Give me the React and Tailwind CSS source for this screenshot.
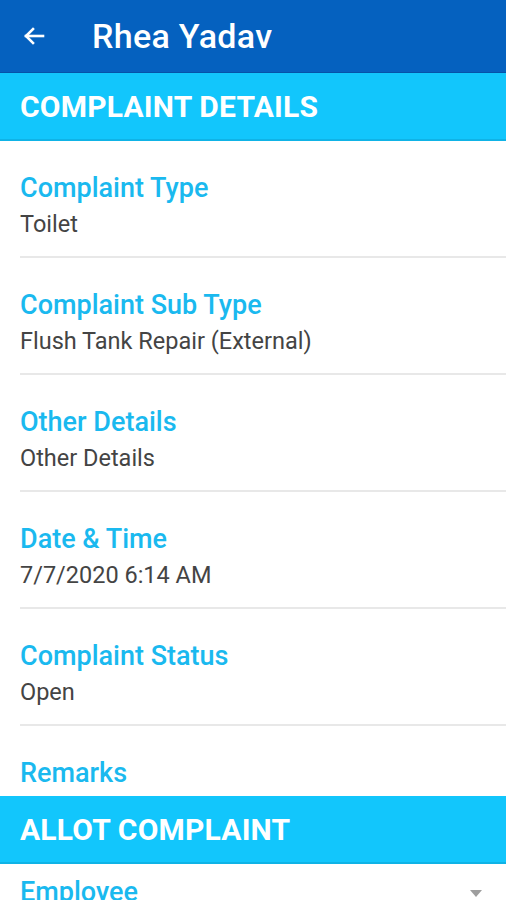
import React from 'react';

const details = [
  { label: 'Complaint Type', value: 'Toilet' },
  { label: 'Complaint Sub Type', value: 'Flush Tank Repair (External)' },
  { label: 'Other Details', value: 'Other Details' },
  { label: 'Date & Time', value: '7/7/2020 6:14 AM' },
  { label: 'Complaint Status', value: 'Open' },
];

const SectionBar = ({ title }) => (
  <div className="h-[68px] bg-[#12c6fc] border-b-2 border-[#0fb3e6] flex items-center px-5">
    <h2 className="text-white text-[30px] font-bold tracking-[0.2px]">{title}</h2>
  </div>
);

const App = () => {
  return (
    <div className="w-[506px] h-[900px] overflow-hidden bg-white" style={{ fontFamily: 'Roboto, "Noto Sans", sans-serif' }}>
      <header className="h-[73px] bg-[#0561bf] border-b border-[#0553a8] flex items-center">
        <button className="ml-[22px] w-6 h-6 flex items-center justify-center text-white">
          <svg width="24" height="24" viewBox="0 0 24 24" fill="none" stroke="currentColor" strokeWidth="2.6" strokeLinecap="square">
            <path d="M21 12H4" />
            <path d="M11 5l-7 7 7 7" strokeLinejoin="miter" />
          </svg>
        </button>
        <h1 className="ml-[46px] text-white text-[34px] font-medium tracking-[0.3px]">Rhea Yadav</h1>
      </header>

      <SectionBar title="COMPLAINT DETAILS" />

      <div className="pl-5">
        {details.map((d) => (
          <div key={d.label} className="pt-[32px] pb-[19px] border-b-2 border-[#e8e8e8]">
            <div className="text-[#1ab9ef] text-[27px] font-medium leading-[30px]">{d.label}</div>
            <div className="mt-[8px] text-[#444] text-[23.5px] leading-[26px]">{d.value}</div>
          </div>
        ))}
        <div className="pt-[32px] pb-[8px]">
          <div className="text-[#1ab9ef] text-[27px] font-medium leading-[30px]">Remarks</div>
        </div>
      </div>

      <SectionBar title="ALLOT COMPLAINT" />

      <div className="pl-5 pr-[24px] pt-[13px] flex items-center justify-between">
        <div className="text-[#1ab9ef] text-[27px] font-medium leading-[30px]">Employee</div>
        <svg width="12" height="8" viewBox="0 0 12 8" className="mt-1">
          <path d="M0 0h12L6 7z" fill="#9e9e9e" />
        </svg>
      </div>
    </div>
  );
};

export default App;
